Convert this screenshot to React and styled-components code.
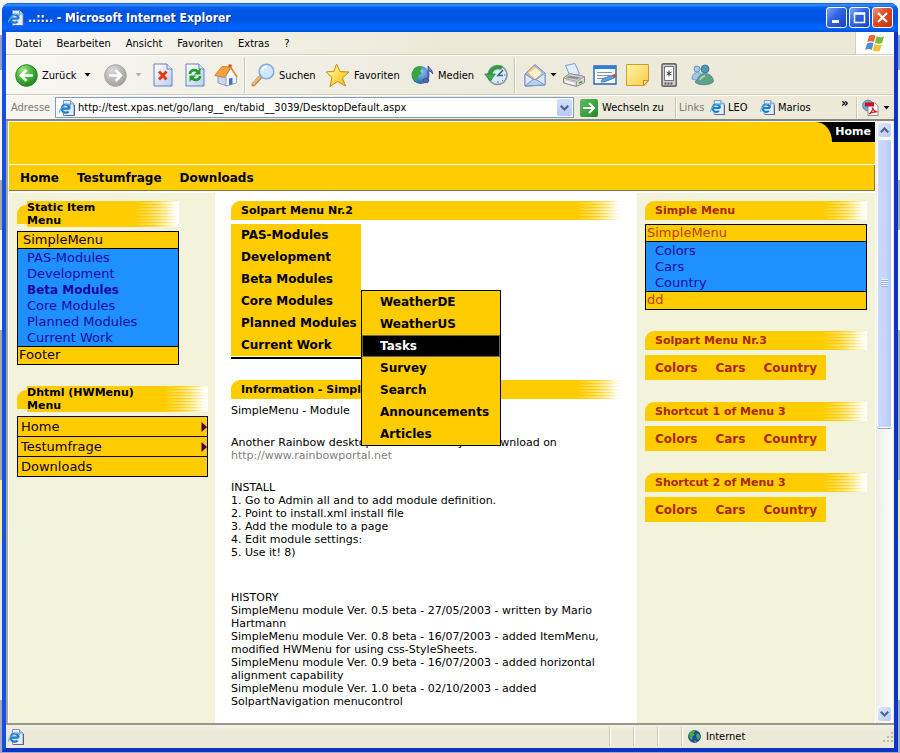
import React from "react";
import styled, { createGlobalStyle, css } from "styled-components";

const UI = `"DejaVu Sans Condensed", "DejaVu Sans", sans-serif`;
const WEB = `"DejaVu Sans", sans-serif`;
const GOLD = "#ffcc00";
const BEIGE = "#f3f3dc";
const CHROME = "#ece9d8";

const Global = createGlobalStyle`
  * { box-sizing: border-box; }
  html, body { margin: 0; padding: 0; }
  body { background: #dfe0ea; font: 11px/13px ${UI}; color: #000; }
  button, input { font: inherit; color: inherit; margin: 0; padding: 0; border: 0; background: none; }
  button { cursor: pointer; text-align: left; }
  ul { list-style: none; margin: 0; padding: 0; }
  h1, h2, p { margin: 0; font: inherit; }
  svg { display: block; flex: none; }
`;

const Desktop = styled.div`
  min-height: 100vh;
  padding: 3px 2px 1px 2px;
  display: flex;
  background: linear-gradient(#f4f4f4 0 35px, #8f9fcf 35px 70px, #f4f4f4 70px 180px, #a8a8a8 180px 230px, #f4f4f4 230px 330px, #a8a8a8 330px 480px, #f2ee9c 480px 540px, #e8e8e8 540px 700px, #a7a5c4 700px);
`;

const Window = styled.div`
  flex: 1;
  min-width: 0;
  display: flex;
  flex-direction: column;
  border: solid #0a3fd6;
  border-width: 0 4px 4px 4px;
  border-color: #0831d9 #0b35c4 #0b35c4 #1650e0;
  border-radius: 8px 8px 0 0;
  background: ${CHROME};
`;

const TitleBar = styled.header`
  height: 29px;
  margin: 0 -4px;
  padding: 0 5px 0 6px;
  display: flex;
  align-items: center;
  gap: 4px;
  border-radius: 8px 8px 0 0;
  background: linear-gradient(#0a57c8 0, #3a93ff 2px, #0a64f0 4px, #0055e5 8px, #0054e3 16px, #0066ff 25px, #0050d8 29px);
  color: #fff;
`;

const WindowTitle = styled.h1`
  flex: 1;
  font: bold 12px/16px ${UI};
  text-shadow: 1px 1px 0 #0a2c86;
  white-space: nowrap;
`;

const CaptionButtons = styled.div`
  display: flex;
  gap: 2px;
`;

const CaptionButton = styled.button`
  width: 21px;
  height: 21px;
  display: grid;
  place-items: center;
  border: 1px solid #fff;
  border-radius: 3px;
  background: ${(p) => (p.$close ? "linear-gradient(135deg,#ee9a80,#dd4a22 45%,#c2330c)" : "linear-gradient(135deg,#7ea4f4,#2f62e2 45%,#1745c4)")};
`;

const MenuBar = styled.nav`
  height: 23px;
  display: flex;
  align-items: stretch;
  border-bottom: 1px solid #d2cebb;
  background: linear-gradient(90deg, #f8f7f3, ${CHROME} 50%);
`;

const MenuList = styled.div`
  flex: 1;
  display: flex;
  align-items: center;
  gap: 15px;
  padding-left: 9px;
`;

const WinFlag = styled.div`
  width: 39px;
  display: grid;
  place-items: center;
  background: #fff;
  border-left: 1px solid #d2cebb;
`;

const ToolBar = styled.div`
  height: 40px;
  display: flex;
  align-items: center;
  padding-left: 9px;
  border-top: 1px solid #fff;
  border-bottom: 1px solid #cfcbb8;
  background: linear-gradient(90deg, #f7f6f1, #edebdd 50%, ${CHROME});
`;

const Tool = styled.button`
  width: ${(p) => p.$w}px;
  flex: none;
  display: flex;
  align-items: center;
  gap: 4px;
  white-space: nowrap;
`;

const Divider = styled.span`
  width: 2px;
  height: ${(p) => p.$h}px;
  flex: none;
  margin-right: ${(p) => p.$after}px;
  border-left: 1px solid #c9c5b2;
  border-right: 1px solid #fff;
`;

const AddressBar = styled.div`
  height: 26px;
  display: flex;
  align-items: center;
  padding: 0 4px 0 5px;
  border-top: 1px solid #fff;
  border-bottom: 2px solid #8a887c;
  background: linear-gradient(90deg, #f7f6f1, #edebdd 50%, ${CHROME});
  white-space: nowrap;
`;

const AddressLabel = styled.label`
  width: 44px;
  color: #7c7a6e;
`;

const AddressField = styled.div`
  flex: 1;
  min-width: 0;
  height: 21px;
  display: flex;
  align-items: center;
  gap: 3px;
  padding: 0 1px 0 3px;
  border: 1px solid #7f9db9;
  background: #fff;
`;

const AddressInput = styled.input`
  flex: 1;
  min-width: 0;
  height: 17px;
  outline: none;
`;

const ComboArrow = styled.button`
  width: 15px;
  height: 17px;
  display: grid;
  place-items: center;
  border-radius: 2px;
  background: linear-gradient(#d3e0fd, #b4c8f6);
`;

const GoButton = styled.button`
  width: 95px;
  margin-left: 6px;
  display: flex;
  align-items: center;
  gap: 4px;
`;

const GoIcon = styled.span`
  width: 18px;
  height: 18px;
  display: grid;
  place-items: center;
  border-radius: 2px;
  background: linear-gradient(135deg, #5fbf5c, #1f8a28);
`;

const LinksLabel = styled.span`
  width: 31px;
  color: #7c7a6e;
`;

const QuickLink = styled.a`
  width: ${(p) => p.$w}px;
  display: flex;
  align-items: center;
  gap: 3px;
  color: #000;
  text-decoration: none;
`;

const More = styled.button`
  width: 15px;
  align-self: flex-start;
  font: bold 13px/13px ${UI};
`;

const Viewport = styled.div`
  flex: 1;
  display: flex;
  border-left: 2px solid #a9a698;
  border-right: 1px solid ${CHROME};
  background: #fff;
`;

const Page = styled.main`
  flex: 1;
  min-width: 0;
  display: flex;
  flex-direction: column;
  padding: 1px 1px 0 1px;
  background: #fff;
  font-family: ${WEB};
`;

const Banner = styled.div`
  height: 42px;
  display: flex;
  justify-content: flex-end;
  align-items: flex-start;
  background: ${GOLD};
`;

const BannerTab = styled.a`
  height: 20px;
  display: flex;
  background: #000;
  color: #fff;
  font: bold 11px/20px ${WEB};
  text-decoration: none;
  padding-right: 4px;
  &::before {
    content: "";
    width: 16px;
    margin-right: 3px;
    background: ${GOLD};
    border-top-right-radius: 16px 20px;
  }
`;

const SiteNav = styled.nav`
  height: 26px;
  margin-top: 1px;
  display: flex;
  align-items: center;
  gap: 18px;
  padding-left: 11px;
  border: solid #8a7440;
  border-width: 0 1px 1px 0;
  background: ${GOLD};
`;

const NavLink = styled.a`
  color: #000;
  font: bold 12px/16px ${WEB};
  text-decoration: none;
`;

const Columns = styled.div`
  flex: 1;
  margin-top: 2px;
  display: flex;
  align-items: stretch;
`;

const Side = styled.aside`
  width: ${(p) => p.$w}px;
  flex: none;
  display: flex;
  flex-direction: column;
  align-items: flex-start;
  padding: 8px 8px 0 8px;
  background: ${BEIGE};
`;

const Center = styled.section`
  flex: 1;
  min-width: 0;
  padding: 8px 16px 15px 16px;
`;

const fade = css`
  &::after {
    content: "";
    width: 45px;
    align-self: stretch;
    background:
      linear-gradient(90deg, transparent 30%, #fff),
      repeating-linear-gradient(transparent 0 1px, #fff2b8 1px 2px, #fff 2px 3px);
    mask-image: linear-gradient(90deg, transparent, #000 90%);
  }
`;

const Heading = styled.h2`
  width: ${(p) => (p.$w ? `${p.$w}px` : "100%")};
  min-height: 19px;
  display: flex;
  justify-content: space-between;
  align-items: center;
  padding-left: 10px;
  border-top-left-radius: 9px;
  background: ${GOLD};
  color: ${(p) => (p.$red ? "#a82800" : "#000")};
  font: bold 11px/13px ${WEB};
  ${fade}
`;

const TallHeading = styled(Heading)`
  height: 26px;
  padding-left: 0;
  border-top-left-radius: 0;
  background: linear-gradient(${GOLD}, ${GOLD}) 10px 0 no-repeat;
  &::before {
    content: "";
    width: 10px;
    height: 19px;
    border-top-left-radius: 9px;
    background: ${GOLD};
  }
  & > span { flex: 1; white-space: pre-line; }
`;

const SimpleBox = styled.div`
  width: ${(p) => (p.$w ? `${p.$w}px` : "100%")};
  margin-top: ${(p) => p.$top}px;
  border: 1px solid #000;
  background: #1e90ff;
  font-size: 13px;
  line-height: 16px;
`;

const BoxCap = styled.div`
  height: ${(p) => (p.$foot ? 18 : 17)}px;
  padding-left: ${(p) => (p.$indent ? 5 : 1)}px;
  background: ${GOLD};
  color: ${(p) => (p.$red ? "#b8400a" : "#100030")};
  border: solid #000;
  border-width: ${(p) => (p.$foot ? "1px 0 0" : "0 0 1px")};
`;

const BoxItems = styled.ul`
  padding: 1px 0 0 9px;
`;

const BoxLink = styled.a`
  color: #1a0a9c;
  font-weight: ${(p) => (p.$on ? "bold" : "normal")};
  font-size: ${(p) => (p.$on ? 12 : 13)}px;
  text-decoration: none;
`;

const HwMenu = styled.ul`
  width: 191px;
  margin-top: 4px;
  border: 1px solid #000060;
  background: #000060;
  display: grid;
  gap: 1px;
`;

const HwLink = styled.a`
  height: 19px;
  display: flex;
  align-items: center;
  justify-content: space-between;
  padding-left: 3px;
  background: ${GOLD};
  color: #100030;
  font-size: 13px;
  text-decoration: none;
`;

const SideMenu = styled.nav`
  width: 181px;
  height: 25px;
  margin: 5px 0 22px;
  display: flex;
  align-items: center;
  gap: 18px;
  padding-left: 10px;
  background: ${GOLD};
`;

const SideMenuLink = styled.a`
  color: #a82800;
  font: bold 12px/16px ${WEB};
  text-decoration: none;
`;

const MenuShelf = styled.div`
  width: 130px;
  margin: 4px 0 21px;
  border-bottom: 2px solid #000;
  padding-bottom: 1px;
`;

const TreeMenu = styled.ul`
  background: ${GOLD};
`;

const TreeRow = styled.li`
  position: relative;
`;

const TreeLink = styled.a`
  height: 22px;
  display: flex;
  align-items: center;
  padding-left: ${(p) => (p.$sub ? 17 : 10)}px;
  border: 1px solid ${(p) => (p.$on ? "#666" : "transparent")};
  border-width: ${(p) => (p.$sub ? "1px" : "1px 0")};
  background: ${(p) => (p.$on ? "#000" : "transparent")};
  color: ${(p) => (p.$on ? "#fff" : "#000")};
  font: bold 12px/16px ${WEB};
  white-space: nowrap;
  text-decoration: none;
`;

const FlyOut = styled.ul`
  position: absolute;
  left: 100%;
  top: 0;
  width: 140px;
  z-index: 2;
  border: 1px solid #000;
  background: ${GOLD};
`;

const Paragraph = styled.p`
  margin-top: ${(p) => p.$top}px;
  font-size: 11px;
  line-height: 13px;
`;

const GreyLink = styled.a`
  color: #808080;
  text-decoration: none;
`;

const Scrollbar = styled.div`
  width: 17px;
  display: flex;
  flex-direction: column;
  gap: 1px;
  padding: 1px;
  background: linear-gradient(90deg, #eeede5, #fefefb);
`;

const ScrollButton = styled.button`
  height: 16px;
  display: grid;
  place-items: center;
  border: 1px solid #fff;
  border-radius: 3px;
  background: linear-gradient(135deg, #dde7ff, #b9cbf5);
`;

const Track = styled.div`
  flex: 1;
`;

const Thumb = styled.div`
  height: 51%;
  display: grid;
  place-items: center;
  border: 1px solid #fff;
  border-radius: 2px;
  background: linear-gradient(90deg, #cbd9fd, #c5d4fc 60%, #b4c6f2);
  box-shadow: 0 1px 0 #8fa6cf;
`;

const Grip = styled.span`
  width: 7px;
  height: 8px;
  background: repeating-linear-gradient(#eef4fe 0 1px, #8cb0f8 1px 2px);
`;

const StatusBar = styled.footer`
  height: 25px;
  display: flex;
  align-items: center;
  border-top: 2px solid #9a978a;
  background: linear-gradient(#f4f2e6, ${CHROME} 6px);
`;

const StatusCell = styled.div`
  width: ${(p) => (p.$w ? `${p.$w}px` : "auto")};
  flex: ${(p) => (p.$w ? "none" : 1)};
  height: 19px;
  display: flex;
  align-items: center;
  gap: 5px;
  padding-left: ${(p) => p.$pad || 0}px;
  border-right: ${(p) => (p.$last ? "0" : "1px solid #cfcbb8")};
  box-shadow: ${(p) => (p.$last ? "none" : "1px 0 0 #fff")};
`;

const Spacer = styled.span`flex: 1;`;

const PageIcon = ({ size = 16 }) => (
  <svg width={size} height={size} viewBox="0 0 16 16">
    <path d="M4.500.5h7l3.500 3.500v11.500h-10.500z" fill="#e4edfc" stroke="#7f93bd" />
    <path d="M11.500.5v3.500h3.500" fill="#c6d5f0" stroke="#7f93bd" />
    <path d="M15.500 5v10.700h-10" fill="none" stroke="#50608c" />
    <circle cx="7" cy="8.800" r="4.800" fill="#cfe8fa" />
    <path d="M10.500 8.600h-7.500M10.700 8.600a4 4 0 1 0-1.200 3" fill="none" stroke="#1f78c8" strokeWidth="2.200" />
    <path d="M1 12.500c-1.500-1.500 4-8.500 8.500-8.500 2 0 2 1 1.500 2" fill="none" stroke="#56b2ec" strokeWidth="1.200" />
  </svg>
);

const DownTri = ({ color = "#000" }) => (
  <svg width="7" height="4" viewBox="0 0 7 4"><path d="M.5 0h6l-3 3.500z" fill={color} /></svg>
);

const Chevron = ({ up }) => (
  <svg width="9" height="6" viewBox="0 0 9 6">
    <path d={up ? "M.8 5.200 4.500 1.500l3.700 3.700" : "M.8.8l3.700 3.700L8.200.8"} fill="none" stroke="#4d6185" strokeWidth="2" />
  </svg>
);

const RoundArrow = ({ back }) => (
  <svg width="23" height="23" viewBox="0 0 23 23">
    <defs>
      <radialGradient id={back ? "ga" : "gb"} cx=".35" cy=".25" r=".85">
        <stop offset="0" stopColor={back ? "#a5e58d" : "#dadada"} />
        <stop offset=".5" stopColor={back ? "#42b435" : "#b9b9b9"} />
        <stop offset="1" stopColor={back ? "#1b7c1c" : "#9c9c9c"} />
      </radialGradient>
    </defs>
    <circle cx="11.500" cy="11.500" r="10.800" fill={back ? "url(#ga)" : "url(#gb)"} stroke={back ? "#278529" : "#a2a2a2"} />
    <path d={back ? "M18 11.500H6.500M11.500 6l-5.500 5.500 5.500 5.500" : "M5 11.500h11.500M11.500 6l5.500 5.500-5.500 5.500"} fill="none" stroke="#fff" strokeWidth="2.600" />
  </svg>
);

const SheetIcon = ({ children }) => (
  <svg width="20" height="24" viewBox="0 0 20 24">
    <defs><linearGradient id="sheet" x2="1" y2="1"><stop stopColor="#fff" /><stop offset="1" stopColor="#b8cff5" /></linearGradient></defs>
    <path d="M1 1h13l5 5v17H1z" fill="url(#sheet)" stroke="#6681bd" />
    <path d="M14 1v5h5" fill="#dfe9fb" stroke="#6681bd" />
    {children}
  </svg>
);

const StopIcon = () => (
  <SheetIcon><path d="M6 8.500l7.500 8M13.500 8.500 6 16.500" stroke="#e63a12" strokeWidth="3" /></SheetIcon>
);

const RefreshIcon = () => (
  <SheetIcon>
    <path d="M5 11c0-4 5-5 8-2.500" fill="none" stroke="#229a25" strokeWidth="2.600" />
    <path d="M15.500 5v6.500H9z" fill="#229a25" />
    <path d="M15 13c0 4-5 5-8 2.500" fill="none" stroke="#229a25" strokeWidth="2.600" />
    <path d="M4.500 19v-6.500H11z" fill="#229a25" />
  </SheetIcon>
);

const HomeIcon = () => (
  <svg width="24" height="24" viewBox="0 0 24 24">
    <path d="M14.500 1.500h3v5h-3z" fill="#c43b20" />
    <path d="M4 12v8l9 3V12z" fill="#c9d6ef" stroke="#7b8fbd" strokeWidth=".8" />
    <path d="M12 23V12.500L17 5l5.500 8.500V20z" fill="#f5f8ff" stroke="#7b8fbd" strokeWidth=".8" />
    <path d="M.8 12.500 8 3.500l9 .5-6.500 10.500z" fill="#f7a23c" stroke="#c67220" strokeWidth=".8" />
    <path d="M16.500 4 23 14" stroke="#e08b35" strokeWidth="1.600" />
    <path d="M15 22v-6.500l3.500-.8v6.500z" fill="#3d70c4" />
  </svg>
);

const SearchIcon = () => (
  <svg width="24" height="24" viewBox="0 0 24 24">
    <path d="M2.500 21.500l7.500-8" stroke="#c07a3c" strokeWidth="4" strokeLinecap="round" />
    <path d="M2.500 21l7-7.500" stroke="#f6b878" strokeWidth="2.200" strokeLinecap="round" />
    <circle cx="15.500" cy="8.500" r="7.300" fill="#cfe9fc" stroke="#8aa9d6" strokeWidth="1.600" />
    <path d="M11 8a5 5 0 0 1 5-4.500" fill="none" stroke="#fff" strokeWidth="2.200" />
  </svg>
);

const StarIcon = () => (
  <svg width="25" height="24" viewBox="0 0 25 24">
    <defs><linearGradient id="star" x2="1" y2="1"><stop stopColor="#fffbb8" /><stop offset=".5" stopColor="#ffdf50" /><stop offset="1" stopColor="#f2aa10" /></linearGradient></defs>
    <path d="M11.500 1l3.500 7.500 9 .5-6.500 6 3 8-8-4.500-7.500 5 2-9L1 9l8-.8z" fill="url(#star)" stroke="#cf8a12" />
  </svg>
);

const Globe = ({ size }) => (
  <svg width={size} height={size} viewBox="0 0 16 16">
    <circle cx="8" cy="8" r="7.400" fill="#1c49a8" stroke="#14326f" strokeWidth=".8" />
    <path d="M2 4c2-3 5-3.500 7-2.500L7 4 8 6 5 8l1 3-2 1C1.500 10 1 7 2 4z" fill="#3fb63a" />
    <path d="M10 5c2-1 4 0 4.800 2 0 3-1 4-2.800 5l-1.500-3z" fill="#46ae52" />
    <path d="M7 13l3-.5.5 2H8z" fill="#3fb63a" />
  </svg>
);

const MediaIcon = () => (
  <svg width="23" height="24" viewBox="0 0 23 24">
    <defs><radialGradient id="globe" cx=".55" cy=".35" r=".7"><stop stopColor="#8ccaf6" /><stop offset="1" stopColor="#1d55ac" /></radialGradient></defs>
    <circle cx="9.500" cy="12" r="9" fill="url(#globe)" />
    <path d="M1.500 9c1-5 6-7 10-5L9 8l2 2.500-4 2.500-1 5.500c-4-1.500-5.500-5-4.500-9.500z" fill="#38a83e" />
    <path d="M11 20.500c0-3 3-5 6.500-5-1 3-3.500 5-6.500 5z" fill="#3aa255" />
    <ellipse cx="15" cy="17.500" rx="2.800" ry="2.300" fill="#5c66b5" stroke="#343f8e" strokeWidth=".7" />
    <path d="M17.200 17.500V3c.8 2.500 4 3 4.500 8-.8-2-2.500-3-4.200-3" fill="#8a92d2" stroke="#3e4896" />
  </svg>
);

const HistoryIcon = () => (
  <svg width="24" height="24" viewBox="0 0 24 24">
    <circle cx="13.500" cy="12" r="9.500" fill="#d8ebf6" stroke="#8594a8" strokeWidth="1.600" />
    <path d="M18 5A8.500 8.500 0 0 0 6 12" fill="none" stroke="#349a43" strokeWidth="4" />
    <path d="M.8 11h10.500l-5 7z" fill="#43ad4e" stroke="#24803a" strokeWidth=".8" />
    <path d="M19 7l-5 5.500h5" fill="none" stroke="#41628a" strokeWidth="1.600" />
    <path d="M14 18v2M20 12h1.500M18 17l1 1" stroke="#5d7590" />
  </svg>
);

const MailIcon = () => (
  <svg width="22" height="24" viewBox="0 0 22 24">
    <path d="M1 11 11 1.500l10 8.500v12L1 23z" fill="#a9c4ea" stroke="#7b93c4" />
    <path d="M3 9.500l7-6.500 8 6-7 8z" fill="#fbd08a" stroke="#d3a25a" strokeWidth=".8" />
    <path d="M5 10l7-5 6 5-7 6z" fill="#fff0d2" />
    <path d="M1 11l10 6.500L21 10v12L1 23z" fill="#dcebfc" stroke="#7b93c4" />
    <path d="M1 23l8-6.500h3L21 22z" fill="#b5d2f2" stroke="#7b93c4" />
  </svg>
);

const PrintIcon = () => (
  <svg width="24" height="24" viewBox="0 0 24 24">
    <path d="M3.500 2.500l9.500-2 4.500 10.500-9 3z" fill="#e2ecff" stroke="#7f98cf" />
    <path d="M1.500 15l6-4.500 15 3v6l-8 4-13-3.500z" fill="#d6d6d6" stroke="#8a8a8a" />
    <path d="M1.500 15l13 3.500v5M14.500 18.500l8-5" fill="none" stroke="#9a9a9a" />
    <path d="M7 12.500l12 2-4 2-11-2z" fill="#8e8e8e" />
    <path d="M3.500 18.500l8.500 2.300" stroke="#fff" strokeWidth="1.800" />
    <path d="M17 20l3-1.500" stroke="#32a132" strokeWidth="1.500" />
  </svg>
);

const EditIcon = () => (
  <svg width="24" height="20" viewBox="0 0 24 20">
    <path d="M1 1h22v18H1z" fill="#f7fbff" stroke="#2a62b4" strokeWidth="1.400" />
    <path d="M1 1h22v3H1z" fill="#2f7fd8" />
    <path d="M4 7.500h15M4 10.500h13M4 13.500h6" stroke="#8a93a3" />
    <path d="M8 17l2-3.500 10-3.500 1.500 3L11 17z" fill="#5ca4e6" stroke="#2a5e9e" strokeWidth=".7" />
    <path d="M19.500 10l3-1.200 1.300 2.800-2.800 1.200z" fill="#dd4637" />
  </svg>
);

const NoteIcon = () => (
  <svg width="23" height="22" viewBox="0 0 23 22">
    <defs><linearGradient id="note" x2="1" y2="1"><stop stopColor="#fff4a5" /><stop offset="1" stopColor="#f7cc48" /></linearGradient></defs>
    <path d="M.5.5h22V17l-4.500 4.500H.5z" fill="url(#note)" stroke="#d09b2e" />
    <path d="M22.500 16.500h-5v5z" fill="#fbe38b" stroke="#c08a20" />
  </svg>
);

const HandheldIcon = () => (
  <svg width="16" height="24" viewBox="0 0 16 24">
    <rect x="1" y=".8" width="14.200" height="22.400" rx="1" fill="#cfcfcf" stroke="#444" strokeWidth="1.200" />
    <path d="M3.500 3.500h9v14h-9z" fill="#fff" stroke="#555" strokeWidth=".8" />
    <path d="M8 7.500v6M5.500 9l5 3M10.500 9l-5 3" stroke="#222" strokeWidth=".9" />
    <path d="M3.500 20.500h9" stroke="#555" strokeWidth="2" strokeDasharray="2 1" />
  </svg>
);

const MessengerIcon = () => (
  <svg width="24" height="22" viewBox="0 0 24 22">
    <circle cx="7" cy="5" r="3" fill="#a3cbea" stroke="#4873a6" strokeWidth=".7" />
    <path d="M2 15c0-4 2-6.500 5.500-6.500S12 10 12 15l-4 2z" fill="#9fc8e8" stroke="#5784b4" strokeWidth=".7" />
    <circle cx="15" cy="5" r="4" fill="#4f98b4" stroke="#2c6a86" strokeWidth=".7" />
    <path d="M5 18c3-1 3-8.500 9.500-8.500S23 13.500 23.500 17.500C21 21.500 8 22 5 18z" fill="#5fa583" stroke="#35769a" strokeWidth=".7" />
    <path d="M10 16c1-2 2-4 5-4" fill="none" stroke="#b5dcc9" strokeWidth="1.400" />
  </svg>
);

const PdfIcon = () => (
  <svg width="17" height="17" viewBox="0 0 17 17">
    <circle cx="6" cy="6.500" r="5.500" fill="#7ba7d6" stroke="#4e759f" strokeWidth=".7" />
    <path d="M6 4h7l3 3v9.500H6z" fill="#fff" stroke="#777" strokeWidth=".8" />
    <path d="M3 3.500h9v4H3z" fill="#c4161c" />
    <path d="M7 15c2-1 4-4 3.500-6.500 1 3 3 4.500 5 4.500-3-.5-6 .5-8.500 2z" fill="none" stroke="#d2232a" strokeWidth="1.200" />
  </svg>
);

const FlagIcon = () => (
  <svg width="20" height="19" viewBox="0 0 20 19">
    <path d="M4 2c2-1.500 4-1.500 6.500-.3L8.800 8.300C6.800 7 4.500 7 2.200 8.500z" fill="#e8663a" />
    <path d="M11.600 2.200c2.500 1.300 5 1.300 7.400 0l-1.800 6.500c-2.500 1.400-5 1.300-7.300 0z" fill="#7cbb3c" />
    <path d="M1.900 9.700c2.400-1.500 4.600-1.500 6.600-.3L6.800 16C4.800 14.800 2.500 14.800.2 16.200z" fill="#4a8fd8" />
    <path d="M9.600 10c2.300 1.300 4.800 1.300 7.300 0l-1.800 6.600c-2.500 1.300-5 1.300-7.300 0z" fill="#f5c235" />
  </svg>
);

const Triangle = () => (
  <svg width="6" height="10" viewBox="0 0 6 10"><path d="M.5 0v10L6 5z" fill="#4a0040" /></svg>
);

const SizeGrip = () => (
  <svg width="12" height="12" viewBox="0 0 12 12">
    <path d="M9 1h2v2H9zM9 5h2v2H9zM5 5h2v2H5zM9 9h2v2H9zM5 9h2v2H5zM1 9h2v2H1z" fill="#b9b6a3" />
  </svg>
);

const fileMenus = ["Datei", "Bearbeiten", "Ansicht", "Favoriten", "Extras", "?"];
const modules = ["PAS-Modules", "Development", "Beta Modules", "Core Modules", "Planned Modules", "Current Work"];
const flyItems = ["WeatherDE", "WeatherUS", "Tasks", "Survey", "Search", "Announcements", "Articles"];
const shortLinks = ["Colors", "Cars", "Country"];

const ShortMenu = ({ title }) => (
  <>
    <Heading $red><span>{title}</span></Heading>
    <SideMenu aria-label={title}>
      {shortLinks.map((l) => <SideMenuLink href="#" key={l}>{l}</SideMenuLink>)}
    </SideMenu>
  </>
);

const SideGroup = styled.div`
  width: 100%;
  margin-top: 21px;
`;

export default function App() {
  return (
    <Desktop>
      <Global />
      <Window>
        <TitleBar>
          <PageIcon />
          <WindowTitle>..::.. - Microsoft Internet Explorer</WindowTitle>
          <CaptionButtons>
            <CaptionButton aria-label="Minimieren">
              <svg width="15" height="15"><path d="M3 10h7v3H3z" fill="#fff" /></svg>
            </CaptionButton>
            <CaptionButton aria-label="Maximieren">
              <svg width="15" height="15"><path d="M2.500 3h10v9.500h-10zM2.500 4h10" fill="none" stroke="#fff" strokeWidth="1.500" /></svg>
            </CaptionButton>
            <CaptionButton $close aria-label="Schließen">
              <svg width="15" height="15"><path d="M3 3l9 9M12 3l-9 9" stroke="#fff" strokeWidth="2.200" /></svg>
            </CaptionButton>
          </CaptionButtons>
        </TitleBar>

        <MenuBar>
          <MenuList>
            {fileMenus.map((m) => <button key={m}>{m}</button>)}
          </MenuList>
          <WinFlag><FlagIcon /></WinFlag>
        </MenuBar>

        <ToolBar>
          <Tool $w={69}><RoundArrow back />Zurück</Tool>
          <Tool $w={20} aria-label="Zurück-Liste"><DownTri /></Tool>
          <Tool $w={31} aria-label="Vorwärts"><RoundArrow /></Tool>
          <Tool $w={18} aria-label="Vorwärts-Liste"><DownTri color="#b5b2a2" /></Tool>
          <Tool $w={32} aria-label="Abbrechen"><StopIcon /></Tool>
          <Tool $w={29} aria-label="Aktualisieren"><RefreshIcon /></Tool>
          <Tool $w={30} aria-label="Startseite"><HomeIcon /></Tool>
          <Divider $h={36} $after={5} />
          <Tool $w={74}><SearchIcon />Suchen</Tool>
          <Tool $w={86}><StarIcon />Favoriten</Tool>
          <Tool $w={73}><MediaIcon />Medien</Tool>
          <Tool $w={30} aria-label="Verlauf"><HistoryIcon /></Tool>
          <Divider $h={36} $after={8} />
          <Tool $w={38} aria-label="E-Mail"><MailIcon /><DownTri /></Tool>
          <Tool $w={31} aria-label="Drucken"><PrintIcon /></Tool>
          <Tool $w={33} aria-label="Bearbeiten"><EditIcon /></Tool>
          <Tool $w={35} aria-label="Diskussion"><NoteIcon /></Tool>
          <Tool $w={29} aria-label="Handheld"><HandheldIcon /></Tool>
          <Tool $w={24} aria-label="Messenger"><MessengerIcon /></Tool>
        </ToolBar>

        <AddressBar>
          <AddressLabel htmlFor="address">Adresse</AddressLabel>
          <AddressField>
            <PageIcon />
            <AddressInput id="address" defaultValue="http://test.xpas.net/go/lang__en/tabid__3039/DesktopDefault.aspx" />
            <ComboArrow aria-label="Adressliste"><Chevron /></ComboArrow>
          </AddressField>
          <GoButton>
            <GoIcon>
              <svg width="14" height="14"><path d="M1 7h11M7 2l5 5-5 5" fill="none" stroke="#fff" strokeWidth="2" /></svg>
            </GoIcon>
            Wechseln zu
          </GoButton>
          <Divider $h={22} $after={2} />
          <LinksLabel>Links</LinksLabel>
          <QuickLink href="#" $w={50}><PageIcon size={15} />LEO</QuickLink>
          <QuickLink href="#" $w={81}><PageIcon size={15} />Marios</QuickLink>
          <More aria-label="Weitere Links">»</More>
          <Divider $h={22} $after={4} />
          <Tool $w={28} aria-label="PDF"><PdfIcon /><DownTri /></Tool>
        </AddressBar>

        <Viewport>
          <Page>
            <Banner><BannerTab href="#">Home</BannerTab></Banner>
            <SiteNav>
              <NavLink href="#">Home</NavLink>
              <NavLink href="#">Testumfrage</NavLink>
              <NavLink href="#">Downloads</NavLink>
            </SiteNav>
            <Columns>
              <Side $w={206}>
                <TallHeading $w={162}><span>{"Static Item\nMenu"}</span></TallHeading>
                <SimpleBox $w={162} $top={4}>
                  <BoxCap $indent>SimpleMenu</BoxCap>
                  <BoxItems>
                    {modules.map((m) => (
                      <li key={m}><BoxLink href="#" $on={m === "Beta Modules"}>{m}</BoxLink></li>
                    ))}
                  </BoxItems>
                  <BoxCap $foot>Footer</BoxCap>
                </SimpleBox>
                <SideGroup>
                  <TallHeading $w={191}><span>{"Dhtml (HWMenu)\nMenu"}</span></TallHeading>
                  <HwMenu>
                    <li><HwLink href="#">Home<Triangle /></HwLink></li>
                    <li><HwLink href="#">Testumfrage<Triangle /></HwLink></li>
                    <li><HwLink href="#">Downloads</HwLink></li>
                  </HwMenu>
                </SideGroup>
              </Side>

              <Center>
                <Heading><span>Solpart Menu Nr.2</span></Heading>
                <MenuShelf>
                  <TreeMenu>
                    {modules.map((m) => (
                      <TreeRow key={m}>
                        <TreeLink href="#">{m}</TreeLink>
                        {m === "Core Modules" && (
                          <FlyOut>
                            {flyItems.map((f) => (
                              <li key={f}><TreeLink href="#" $sub $on={f === "Tasks"}>{f}</TreeLink></li>
                            ))}
                          </FlyOut>
                        )}
                      </TreeRow>
                    ))}
                  </TreeMenu>
                </MenuShelf>
                <Heading><span>Information - SimpleMenu</span></Heading>
                <Paragraph $top={5}>SimpleMenu - Module</Paragraph>
                <Paragraph $top={19}>
                  Another Rainbow desktop module is ready for download on<br />
                  <GreyLink href="#">http://www.rainbowportal.net</GreyLink>
                </Paragraph>
                <Paragraph $top={19}>
                  INSTALL<br />
                  1. Go to Admin all and to add module definition.<br />
                  2. Point to install.xml install file<br />
                  3. Add the module to a page<br />
                  4. Edit module settings:<br />
                  5. Use it! 8)
                </Paragraph>
                <Paragraph $top={32}>
                  HISTORY<br />
                  SimpleMenu module Ver. 0.5 beta - 27/05/2003 - written by Mario Hartmann<br />
                  SimpleMenu module Ver. 0.8 beta - 16/07/2003 - added ItemMenu, modified HWMenu for using css-StyleSheets.<br />
                  SimpleMenu module Ver. 0.9 beta - 16/07/2003 - added horizontal alignment capability<br />
                  SimpleMenu module Ver. 1.0 beta - 02/10/2003 - added SolpartNavigation menucontrol
                </Paragraph>
              </Center>

              <Side $w={238}>
                <Heading $red><span>Simple Menu</span></Heading>
                <SimpleBox $top={4}>
                  <BoxCap $red>SimpleMenu</BoxCap>
                  <BoxItems>
                    {shortLinks.map((l) => <li key={l}><BoxLink href="#">{l}</BoxLink></li>)}
                  </BoxItems>
                  <BoxCap $foot $red>dd</BoxCap>
                </SimpleBox>
                <SideGroup>
                  <ShortMenu title="Solpart Menu Nr.3" />
                  <ShortMenu title="Shortcut 1 of Menu 3" />
                  <ShortMenu title="Shortcut 2 of Menu 3" />
                </SideGroup>
              </Side>
            </Columns>
          </Page>
          <Scrollbar>
            <ScrollButton aria-label="Nach oben"><Chevron up /></ScrollButton>
            <Track><Thumb><Grip /></Thumb></Track>
            <ScrollButton aria-label="Nach unten"><Chevron /></ScrollButton>
          </Scrollbar>
        </Viewport>

        <StatusBar>
          <StatusCell $pad={2}><PageIcon /></StatusCell>
          <StatusCell $w={24} />
          <StatusCell $w={24} />
          <StatusCell $w={24} />
          <StatusCell $w={212} $pad={6} $last><Globe size={13} />Internet<Spacer /><SizeGrip /></StatusCell>
        </StatusBar>
      </Window>
    </Desktop>
  );
}
